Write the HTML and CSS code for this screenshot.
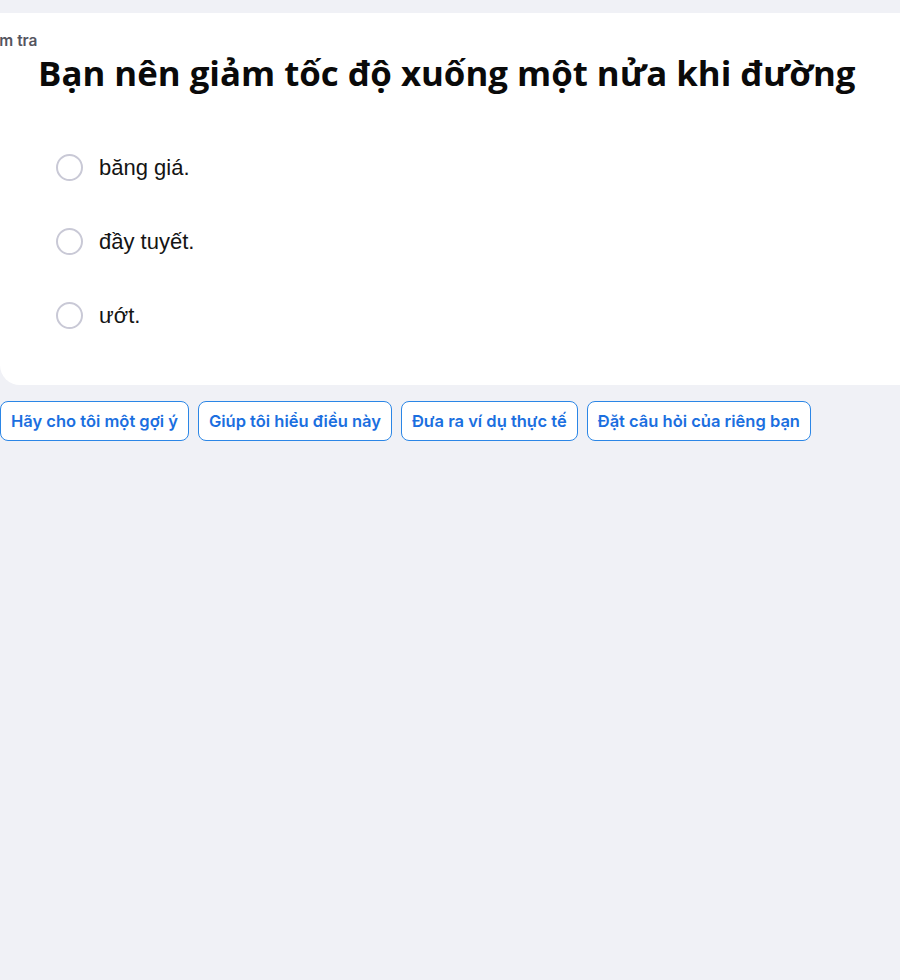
FILE: index.html
```html
<!DOCTYPE html>
<html lang="vi">
<head>
<meta charset="utf-8">
<link rel="stylesheet" href="styles.css">
</head>
<body>
<div class="page">
  <section class="card">
    <div class="label">Kiểm tra</div>
    <h1 class="title">Bạn nên giảm tốc độ xuống một nửa khi đường</h1>
    <ul class="options">
      <li class="option"><span class="radio"></span><span class="opt-text">băng giá.</span></li>
      <li class="option"><span class="radio"></span><span class="opt-text">đầy tuyết.</span></li>
      <li class="option"><span class="radio"></span><span class="opt-text">ướt.</span></li>
    </ul>
  </section>
  <div class="chips">
    <button class="chip">Hãy cho tôi một gợi ý</button>
    <button class="chip">Giúp tôi hiểu điều này</button>
    <button class="chip">Đưa ra ví dụ thực tế</button>
    <button class="chip">Đặt câu hỏi của riêng bạn</button>
  </div>
</div>
</body>
</html>
```

FILE: styles.css
```css
html, body {
  margin: 0;
  padding: 0;
}
body {
  background: #f0f1f6;
  overflow: hidden;
  width: 900px;
  height: 980px;
}
.page {
  padding-top: 13px;
}
.card {
  background: #ffffff;
  width: 920px;
  height: 372px;
  box-sizing: border-box;
  border-radius: 0 16px 20px 20px;
  overflow: hidden;
  padding-top: 20px;
}
.label {
  font-family: "Inter", "Noto Sans", sans-serif;
  font-weight: 600;
  font-size: 15.5px;
  line-height: 16px;
  color: #55555f;
  margin-left: -25px;
}
.title {
  margin: 4px 0 0 38px;
  font-family: "Open Sans", "Noto Sans", sans-serif;
  font-weight: 700;
  font-size: 34.8px;
  line-height: 40px;
  color: #0a0a0a;
}
.options {
  list-style: none;
  margin: 37px 0 0 0;
  padding: 0 0 0 56px;
}
.option {
  display: flex;
  align-items: center;
  gap: 16px;
  height: 74px;
}
.radio {
  width: 27px;
  height: 27px;
  box-sizing: border-box;
  border: 2px solid #c9c9d6;
  border-radius: 50%;
  flex: none;
}
.opt-text {
  font-family: "Liberation Sans", Arial, sans-serif;
  font-size: 22px;
  color: #141414;
  padding-top: 2px;
}
.chips {
  display: flex;
  gap: 9px;
  margin-top: 16px;
}
.chip {
  height: 40px;
  box-sizing: border-box;
  padding: 0 10px;
  background: #ffffff;
  border: 1px solid #2b86e6;
  border-radius: 8px;
  font-family: "Inter", "Noto Sans", sans-serif;
  font-weight: 600;
  font-size: 16.5px;
  color: #1b6fe0;
  white-space: nowrap;
}
```
